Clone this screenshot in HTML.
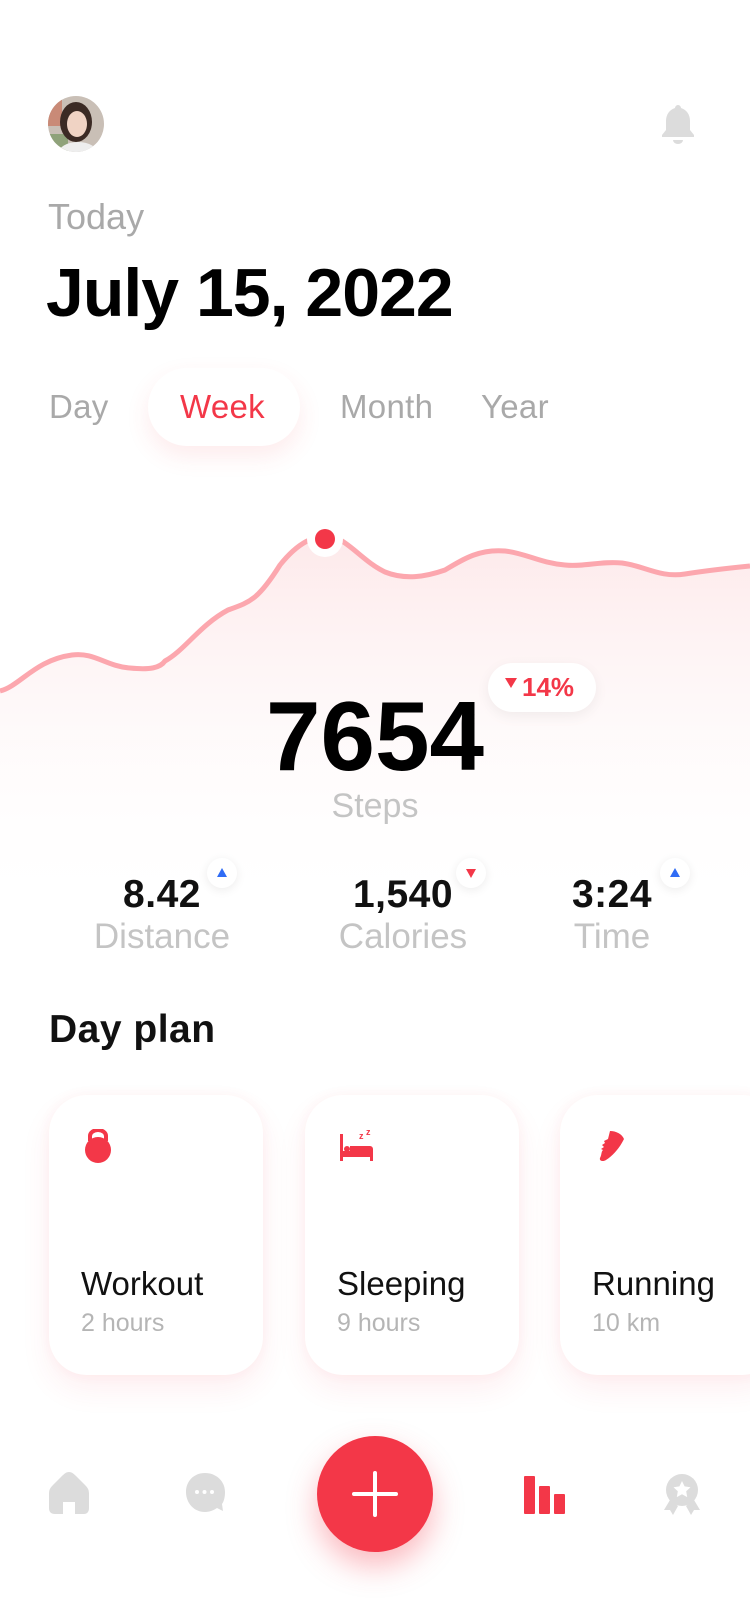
<!DOCTYPE html>
<html><head><meta charset="utf-8">
<style>
*{margin:0;padding:0;box-sizing:border-box}
body{width:750px;height:1624px;background:#fff;font-family:"Liberation Sans",sans-serif;position:relative;overflow:hidden}
.abs{position:absolute}
.gray{color:#a9a9a9}
.card{position:absolute;top:1095px;width:214px;height:280px;background:#fff;border-radius:38px;box-shadow:0 14px 30px rgba(243,55,72,0.08),0 0 12px rgba(243,55,72,0.05)}
.card .t{position:absolute;left:32px;top:170px;font-size:33px;color:#111}
.card .s{position:absolute;left:32px;top:214px;font-size:25px;color:#b5b5b5}
.card svg{position:absolute;left:34px;top:34px}
.stat{position:absolute;top:873px;text-align:center;width:240px}
.stat b{display:block;font-size:39px;color:#111;letter-spacing:0.5px}
.stat span{display:block;font-size:35px;color:#c4c4c4;margin-top:0px}
.tri{position:absolute;width:30px;height:30px;border-radius:50%;background:#fff;box-shadow:0 2px 10px rgba(0,0,0,0.08)}
.tab{position:absolute;top:388px;font-size:33px;letter-spacing:0.3px}
</style></head><body>
<svg class="abs" style="left:0;top:500px" width="750" height="420" viewBox="0 500 750 420">
<defs><linearGradient id="g" x1="0" y1="0" x2="0" y2="1"><stop offset="0" stop-color="#fde9ea"/><stop offset="1" stop-color="#fff" stop-opacity="0"/></linearGradient></defs>
<path d="M0,691 C20,686 35,660 72,655 C95,652 105,666 130,668 C150,670 160,668 165,661 C185,650 200,625 228,610 C250,602 258,600 280,565 C300,540 315,537 325,536 C345,535 360,560 385,572 C405,580 425,577 445,570 C465,558 480,549 505,551 C525,553 540,563 565,565 C585,567 600,561 622,563 C645,566 660,578 685,574 C710,570 730,568 750,566 L750,920 L0,920 Z" fill="url(#g)"/>
<path d="M0,691 C20,686 35,660 72,655 C95,652 105,666 130,668 C150,670 160,668 165,661 C185,650 200,625 228,610 C250,602 258,600 280,565 C300,540 315,537 325,536 C345,535 360,560 385,572 C405,580 425,577 445,570 C465,558 480,549 505,551 C525,553 540,563 565,565 C585,567 600,561 622,563 C645,566 660,578 685,574 C710,570 730,568 750,566" fill="none" stroke="#fca7ae" stroke-width="5"/>
<circle cx="325" cy="539" r="18" fill="#fff"/><circle cx="325" cy="539" r="10" fill="#f33748"/>
</svg>
<svg class="abs" style="left:48px;top:96px" width="56" height="56"><defs><clipPath id="c"><circle cx="28" cy="28" r="28"/></clipPath></defs><g clip-path="url(#c)"><rect width="56" height="56" fill="#c9bfb6"/><rect x="0" y="0" width="14" height="30" fill="#c98a77"/><rect x="0" y="38" width="20" height="18" fill="#8fa27a"/><ellipse cx="28" cy="26" rx="16" ry="20" fill="#3b2a24"/><ellipse cx="29" cy="28" rx="10" ry="13" fill="#f0d3c4"/><ellipse cx="30" cy="58" rx="20" ry="12" fill="#eeeeee"/></g></svg>
<svg class="abs" style="left:658px;top:103px" width="40" height="42" viewBox="0 0 40 42"><path d="M20 2c2 0 3 2 3 3 6 2 9 7 9 13v9l4 5v2H4v-2l4-5v-9c0-6 3-11 9-13 0-1 1-3 3-3z" fill="#dcdcdc"/><path d="M15 37h10a5 4 0 0 1-10 0z" fill="#dcdcdc"/></svg>
<div class="abs gray" style="left:48px;top:196px;font-size:36px">Today</div>
<div class="abs" style="left:46px;top:254px;font-size:68px;font-weight:bold;letter-spacing:-1px;color:#000">July 15, 2022</div>
<div class="abs" style="left:148px;top:368px;width:152px;height:78px;border-radius:39px;background:#fff;box-shadow:0 10px 24px rgba(243,55,72,0.10)"></div>
<div class="tab gray" style="left:49px">Day</div>
<div class="tab" style="left:180px;color:#f33748">Week</div>
<div class="tab gray" style="left:340px">Month</div>
<div class="tab gray" style="left:481px">Year</div>
<div class="abs" style="left:488px;top:663px;width:108px;height:49px;border-radius:25px;background:#fff;box-shadow:0 4px 14px rgba(0,0,0,0.06)"></div>
<svg class="abs" style="left:505px;top:678px" width="12" height="10"><path d="M0 0h12L6 10z" fill="#f33748"/></svg>
<div class="abs" style="left:522px;top:672px;font-size:26px;font-weight:bold;color:#f33748">14%</div>
<div class="abs" style="left:0;width:750px;text-align:center;top:680px;font-size:98px;font-weight:bold;color:#000;letter-spacing:0px">7654</div>
<div class="abs" style="left:0;width:750px;text-align:center;top:787px;font-size:34px;color:#c4c4c4">Steps</div>
<div class="stat" style="left:42px"><b>8.42</b><span>Distance</span></div>
<div class="stat" style="left:283px"><b>1,540</b><span>Calories</span></div>
<div class="stat" style="left:492px"><b>3:24</b><span>Time</span></div>
<div class="tri" style="left:207px;top:858px"><svg width="30" height="30"><path d="M10 19h10l-5-9z" fill="#2f6cf5"/></svg></div>
<div class="tri" style="left:456px;top:858px"><svg width="30" height="30"><path d="M10 11h10l-5 9z" fill="#f33748"/></svg></div>
<div class="tri" style="left:660px;top:858px"><svg width="30" height="30"><path d="M10 19h10l-5-9z" fill="#2f6cf5"/></svg></div>
<div class="abs" style="left:49px;top:1008px;font-size:39px;font-weight:bold;color:#111;letter-spacing:0.5px">Day plan</div>
<div class="card" style="left:49px"><svg width="30" height="34" viewBox="0 0 30 34"><path d="M7 12V7a8 6 0 0 1 16 0v5" fill="none" stroke="#f33748" stroke-width="4"/><circle cx="15" cy="21" r="13" fill="#f33748"/></svg><div class="t">Workout</div><div class="s">2 hours</div></div>
<div class="card" style="left:305px"><svg width="36" height="34" viewBox="0 0 36 34"><rect x="1" y="5" width="3" height="27" fill="#f33748"/><circle cx="8" cy="20" r="3" fill="#f33748"/><path d="M3 22h8v-5h20a3 3 0 0 1 3 3v12h-3v-4H3z" fill="#f33748"/><text x="20" y="10" font-size="9" font-weight="bold" fill="#f33748" font-family="Liberation Sans">z</text><text x="27" y="6" font-size="9" font-weight="bold" fill="#f33748" font-family="Liberation Sans">z</text></svg><div class="t">Sleeping</div><div class="s">9 hours</div></div>
<div class="card" style="left:560px;width:220px"><svg width="34" height="34" viewBox="0 0 34 34"><path d="M16 2c6 0 12 3 14 8-4 8-10 16-18 21-3 2-7 1-6-2 2-4 1-6 3-8l-2-1 3-2-2-2 3-2-1-2 4-2z" fill="#f33748"/></svg><div class="t">Running</div><div class="s">10 km</div></div>
<svg class="abs" style="left:48px;top:1470px" width="42" height="44" viewBox="0 0 42 44"><path d="M21 2c3 0 5 2 8 5l8 8c3 3 4 5 4 9v14c0 4-2 6-5 6h-9V32h-12v12H7c-4 0-6-2-6-6V24c0-4 1-6 4-9l8-8c3-3 5-5 8-5z" fill="#dcdcdc"/></svg>
<svg class="abs" style="left:184px;top:1472px" width="42" height="42" viewBox="0 0 42 42"><path d="M21 1C10 1 2 9 2 20s8 20 19 20c5 0 9-2 12-4l6 3-1-7c2-3 3-7 3-12C41 9 32 1 21 1z" fill="#dcdcdc"/><circle cx="13" cy="20" r="2" fill="#fff"/><circle cx="20.5" cy="20" r="2" fill="#fff"/><circle cx="28" cy="20" r="2" fill="#fff"/></svg>
<div class="abs" style="left:317px;top:1436px;width:116px;height:116px;border-radius:50%;background:#f33748;box-shadow:0 14px 30px rgba(243,55,72,0.35)"></div>
<svg class="abs" style="left:352px;top:1471px" width="46" height="46"><path d="M23 2v42M2 23h42" stroke="#fff" stroke-width="4" stroke-linecap="round"/></svg>
<svg class="abs" style="left:524px;top:1474px" width="42" height="40"><rect x="0" y="2" width="11" height="38" rx="1" fill="#f33748"/><rect x="15" y="12" width="11" height="28" rx="1" fill="#f33748"/><rect x="30" y="20" width="11" height="20" rx="1" fill="#f33748"/></svg>
<svg class="abs" style="left:662px;top:1472px" width="40" height="44" viewBox="0 0 40 44"><path d="M8 28l-6 10h6l3 5 5-9zM32 28l6 10h-6l-3 5-5-9z" fill="#dcdcdc"/><circle cx="20" cy="18" r="16" fill="#dcdcdc"/><path d="M20 9l2.6 5.4 5.9.8-4.3 4.1 1 5.8L20 22.3 14.8 25.1l1-5.8-4.3-4.1 5.9-.8z" fill="#fff"/></svg>
</body></html>
